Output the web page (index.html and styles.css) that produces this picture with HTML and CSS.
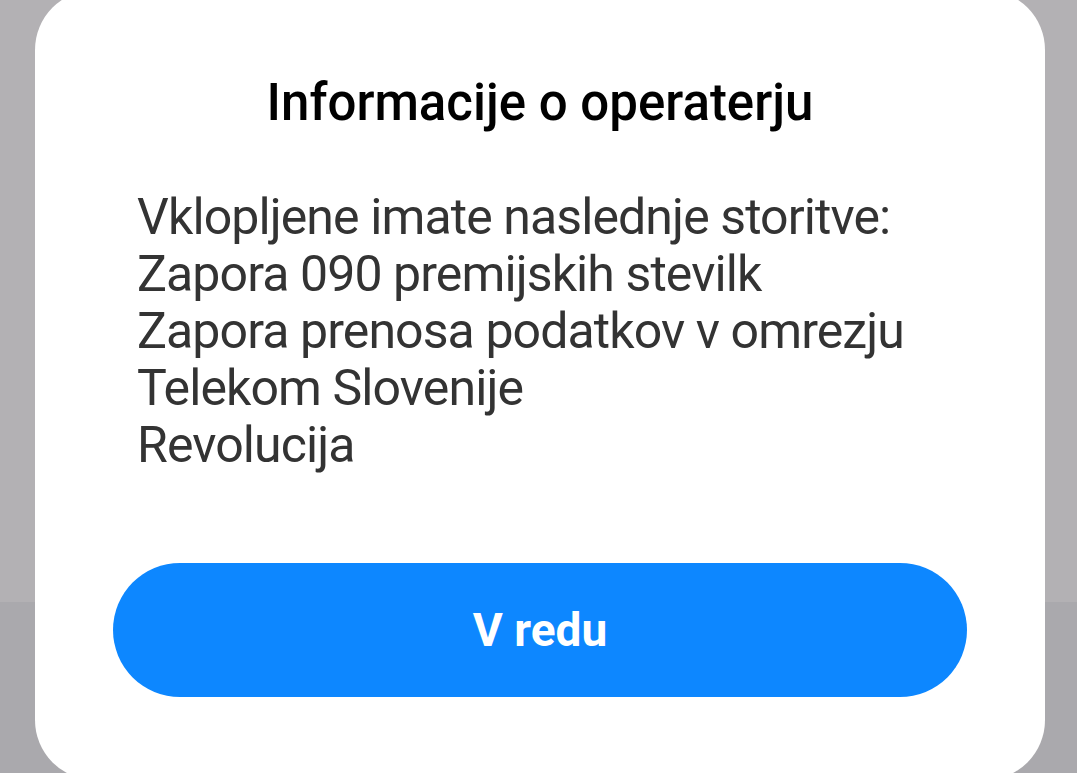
FILE: index.html
```html
<!DOCTYPE html>
<html lang="sl">
<head>
<meta charset="utf-8">
<title>Informacije o operaterju</title>
<link rel="stylesheet" href="styles.css">
</head>
<body>
<div class="screen">
  <div class="dialog">
    <h1 class="dialog-title">Informacije o operaterju</h1>
    <div class="dialog-body">
      <p>Vklopljene imate naslednje storitve:</p>
      <p>Zapora 090 premijskih stevilk</p>
      <p>Zapora prenosa podatkov v omrezju</p>
      <p>Telekom Slovenije</p>
      <p>Revolucija</p>
    </div>
    <button class="dialog-button" type="button">V redu</button>
  </div>
</div>
</body>
</html>
```

FILE: styles.css
```css
html, body {
  margin: 0;
  padding: 0;
  height: 100%;
  overflow: hidden;
}

body {
  font-family: Roboto, "Noto Sans", "Liberation Sans", sans-serif;
}

.screen {
  height: 773px;
  background: linear-gradient(to bottom, #b3b1b4 0, #b3b1b4 602px, #aaa9ad 602px, #aaa9ad 100%);
  overflow: hidden;
}

.dialog {
  box-sizing: border-box;
  width: 1010px;
  height: 790px;
  margin: -10px 0 0 35px;
  padding: 81px 78px 0;
  background: #ffffff;
  border-radius: 60px;
  display: flex;
  flex-direction: column;
}

.dialog-title {
  margin: 0;
  font-size: 51px;
  line-height: 64px;
  font-weight: 500;
  color: #000000;
  text-align: center;
}

.dialog-body {
  margin: 54px 0 0 24px;
  color: #333333;
  font-size: 50px;
  line-height: 57px;
  letter-spacing: -0.9px;
}

.dialog-body p {
  margin: 0;
  white-space: nowrap;
}

.dialog-button {
  margin-top: 89px;
  height: 134px;
  width: 100%;
  border: none;
  border-radius: 67px;
  background: #0d87ff;
  color: #ffffff;
  font-family: Roboto, "Noto Sans", "Liberation Sans", sans-serif;
  font-size: 46px;
  font-weight: 700;
  padding: 0;
}
```
